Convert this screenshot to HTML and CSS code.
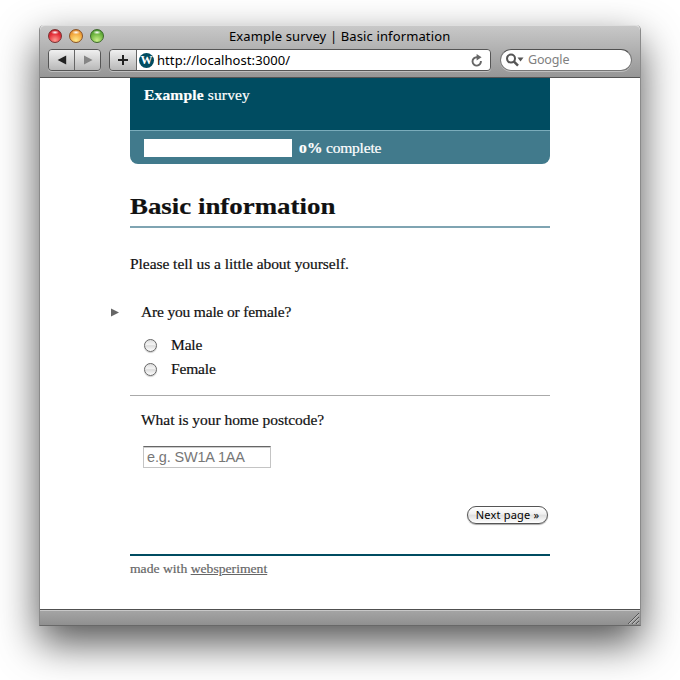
FILE: index.html
```html
<!DOCTYPE html>
<html lang="en">
<head>
<meta charset="utf-8">
<title>Example survey | Basic information</title>
<link rel="stylesheet" href="styles.css">
</head>
<body>
<div class="window">
  <header class="chrome">
    <div class="titlebar">
      <div class="lights"><i class="light red"></i><i class="light amber"></i><i class="light green"></i></div>
      <div class="title"><span>Example survey | Basic information</span></div>
    </div>
    <div class="toolbar">
      <div class="nav">
        <span class="nav-btn"><svg width="10" height="10" viewBox="0 0 10 10"><path d="M9.2 .4v9L.6 4.9z" fill="#222"/></svg></span>
        <span class="nav-btn"><svg width="10" height="10" viewBox="0 0 10 10"><path d="M1 .4v9l8.5-4.5z" fill="#858585"/></svg></span>
      </div>
      <div class="address">
        <span class="add"><svg width="12" height="12" viewBox="0 0 12 12"><path d="M6 1v10M1 6h10" stroke="#222" stroke-width="2"/></svg></span>
        <div class="url">
          <span class="favicon">W</span>
          <span class="url-text">http://localhost:3000/</span>
          <svg class="reload" width="12" height="13" viewBox="0 0 12 13"><path d="M9.9 7A4.2 4.2 0 1 1 5.7 3.2h1.5" fill="none" stroke="#666" stroke-width="1.9"/><path d="M5.6 0l5 3.2-5 3.2z" fill="#666"/></svg>
        </div>
      </div>
      <div class="search">
        <svg width="18" height="14" viewBox="0 0 18 14"><circle cx="5" cy="5.6" r="4" fill="none" stroke="#555" stroke-width="2"/><path d="M8 8.6l4 4" stroke="#555" stroke-width="2.4"/><path d="M11.5 4.6h6l-3 4z" fill="#555"/></svg>
        <span class="search-text">Google</span>
      </div>
    </div>
  </header>
  <main class="page">
    <div class="banner"><span><b>Example</b> survey</span></div>
    <div class="progress"><div class="bar"></div><span><b><span class="zero">0</span>%</b> complete</span></div>
    <h1><span>Basic information</span></h1>
    <p class="intro"><span>Please tell us a little about yourself.</span></p>
    <section class="question first">
      <svg class="marker" width="8" height="9" viewBox="0 0 8 9"><path d="M0 .4v8.2L8 4.5z" fill="#666"/></svg>
      <span class="prompt-sex">Are you male or female?</span>
      <label class="option"><i class="radio"></i><span class="choice">Male</span></label>
      <label class="option"><i class="radio"></i><span class="choice">Female</span></label>
    </section>
    <section class="question second">
      <span class="prompt-post">What is your home postcode?</span>
      <div class="field"><span>e.g. SW1A 1AA</span></div>
    </section>
    <div class="actions"><button type="button"><span>Next page »</span></button></div>
    <footer><span>made with <u>websperiment</u></span></footer>
  </main>
  <div class="status"><svg width="12" height="12" viewBox="0 0 12 12"><path d="M0 11L11 0M4 11l7-7M8 11l3-3" stroke="#555"/><path d="M1.3 11L11 1.3M5.3 11L11 5.3M9.3 11L11 9.3" stroke="#ccc"/></svg></div>
</div>
</body>
</html>
```
FILE: styles.css
```css
* { box-sizing: border-box; }
body {
  margin: 0;
  height: 680px;
  padding: 25px 39px 0;
  overflow: hidden;
  background: #fff;
  color: #111;
  font-family: "Liberation Serif", serif;
  font-size: 15.5px;
}
span { white-space: nowrap; }
svg { display: block; flex: none; }
.window {
  width: 602px;
  height: 601px;
  border: 1px solid #8a8a8a;
  border-top: 0;
  border-bottom-color: #686868;
  border-radius: 5px 5px 0 0;
  background: #fff;
  box-shadow: 0 17px 40px rgba(0, 0, 0, .68);
}
.chrome {
  height: 53px;
  border-radius: 5px 5px 0 0;
  border-top: 1px solid #dedede;
  border-bottom: 1px solid #555;
  background: linear-gradient(#c8c8c8, #969696);
  font-family: "Noto Sans", sans-serif;
  color: #000;
}
.titlebar {
  display: grid;
  grid-template-columns: 188px 1fr;
  height: 23px;
  padding-left: 1px;
}
.lights { display: flex; gap: 7px; padding: 3px 0 0 7px; }
.light {
  width: 14px;
  height: 14px;
  border: 1px solid #7a3030;
  border-radius: 50%;
}
.red { background: radial-gradient(ellipse 4px 2px at 50% 20%, #fff, transparent), radial-gradient(circle at 50% 85%, #ff9a90, #e5303a 55%, #b81823); }
.amber { border-color: #8a5426; background: radial-gradient(ellipse 4px 2px at 50% 20%, #fff, transparent), radial-gradient(circle at 50% 85%, #ffe98a, #f2a53b 60%, #cf7524); }
.green { border-color: #3d6a2a; background: radial-gradient(ellipse 4px 2px at 50% 20%, #fff, transparent), radial-gradient(circle at 50% 85%, #c9f08a, #69b13b 60%, #3a8a28); }
.title { font-size: 13px; line-height: 21px; letter-spacing: .13px; }
.toolbar { display: flex; height: 23px; padding-left: 8px; }
.nav, .address {
  display: flex;
  height: 22px;
  border: 1px solid #555;
  border-radius: 4px;
  box-shadow: 0 1px 0 #c0c0c0;
  overflow: hidden;
}
.nav { width: 53px; }
.nav-btn, .add {
  display: flex;
  align-items: center;
  justify-content: center;
  width: 26px;
  background: linear-gradient(#f0f0f0, #b8b8b8);
}
.nav-btn + .nav-btn { border-left: 1px solid #666; }
.address { width: 382px; margin-left: 8px; }
.add { width: 27px; border-right: 1px solid #666; }
.url {
  display: flex;
  align-items: center;
  flex: 1;
  padding: 0 7px 0 2px;
  background: #fff;
}
.favicon {
  width: 15px;
  height: 15px;
  border-radius: 50%;
  background: #004c61;
  color: #fff;
  font: bold 12px/15px "Liberation Serif", serif;
  text-align: center;
}
.url-text { margin-left: 3px; font-size: 13px; line-height: 20px; letter-spacing: .07px; }
.reload { margin-left: auto; }
.search {
  display: flex;
  align-items: center;
  width: 132px;
  height: 22px;
  margin-left: 9px;
  padding-left: 5px;
  border: 1px solid #777;
  border-top-color: #505050;
  border-radius: 11px;
  background: #fff;
  box-shadow: 0 1px 0 #c0c0c0;
}
.search-text { margin-left: 4px; color: #808080; font-size: 12.5px; line-height: 20px; letter-spacing: -.15px; }
.page {
  width: 420px;
  height: 531px;
  margin: 0 auto;
  -webkit-text-stroke: .2px;
}
.banner {
  height: 52px;
  padding: 7px 14px;
  background: #004c61;
  color: #fff;
  line-height: 19px;
  letter-spacing: .16px;
}
.progress {
  display: flex;
  align-items: center;
  height: 34px;
  padding: 1px 14px 0;
  border-top: 1px solid #7aacbb;
  border-radius: 0 0 8px 8px;
  background: #417a8c;
  color: #fff;
  letter-spacing: -.2px;
}
.zero { display: inline-block; width: 8px; font-size: 11.5px; transform: scaleX(1.35); transform-origin: left; }
.bar { width: 148px; height: 18px; margin-right: 7px; background: #fff; }
h1 {
  height: 64px;
  margin: 0;
  padding-top: 28px;
  border-bottom: 2px solid #7fa4b2;
  font-size: 24px;
  line-height: 28px;
}
h1 span { display: inline-block; transform: scaleX(1.12); transform-origin: left; }
.intro { height: 66px; margin: 0; padding-top: 26px; line-height: 20px; letter-spacing: -.05px; }
.question { position: relative; padding-left: 11px; line-height: 20px; }
.question > span { display: block; }
.first { height: 102px; padding-top: 8px; border-bottom: 1px solid #aaa; }
.marker { position: absolute; left: -19px; top: 14px; }
.prompt-sex { margin-bottom: 11px; letter-spacing: -.17px; }
.option { display: flex; align-items: center; height: 24px; padding-left: 3px; letter-spacing: -.15px; }
.radio {
  width: 13px;
  height: 13px;
  margin-right: 14px;
  border: 1px solid #666;
  border-radius: 50%;
  background: linear-gradient(#ddd, #f4f4f4 40%, #dcdcdc 52%, #fff);
  box-shadow: 0 1px 1px #ccc;
}
.second { height: 110px; padding-top: 14px; }
.prompt-post { letter-spacing: -.04px; }
.field {
  width: 128px;
  height: 22px;
  margin: 16px 0 0 2px;
  padding-left: 3px;
  border: 1px solid #c4c4c4;
  border-top: 1px solid #666;
  box-shadow: inset 0 1px 0 #ccc;
  color: #777;
  font: 14.5px/21px "Liberation Sans", sans-serif;
  letter-spacing: -.16px;
  -webkit-text-stroke: 0;
}
.actions { display: flex; justify-content: flex-end; height: 48px; padding-right: 2px; }
button {
  width: 81px;
  height: 18px;
  padding: 0;
  border: 1px solid #555;
  border-radius: 9px;
  background: linear-gradient(#fff, #f0f0f0 45%, #dedede 50%, #fff);
  box-shadow: 0 1px 1px #aaa;
  color: #000;
  font: 11px/14px "Noto Sans", sans-serif;
  letter-spacing: .18px;
  -webkit-text-stroke: 0;
}
footer { padding-top: 4px; border-top: 2px solid #004c61; color: #666; font-size: 13px; line-height: 18px; }
footer span { display: inline-block; transform: scaleX(1.05); transform-origin: left; }
.status {
  display: flex;
  align-items: flex-end;
  justify-content: flex-end;
  height: 16px;
  border-top: 1px solid #505050;
  background: linear-gradient(#c8c8c8 1px, #a4a4a4 1px, #909090);
}
```
